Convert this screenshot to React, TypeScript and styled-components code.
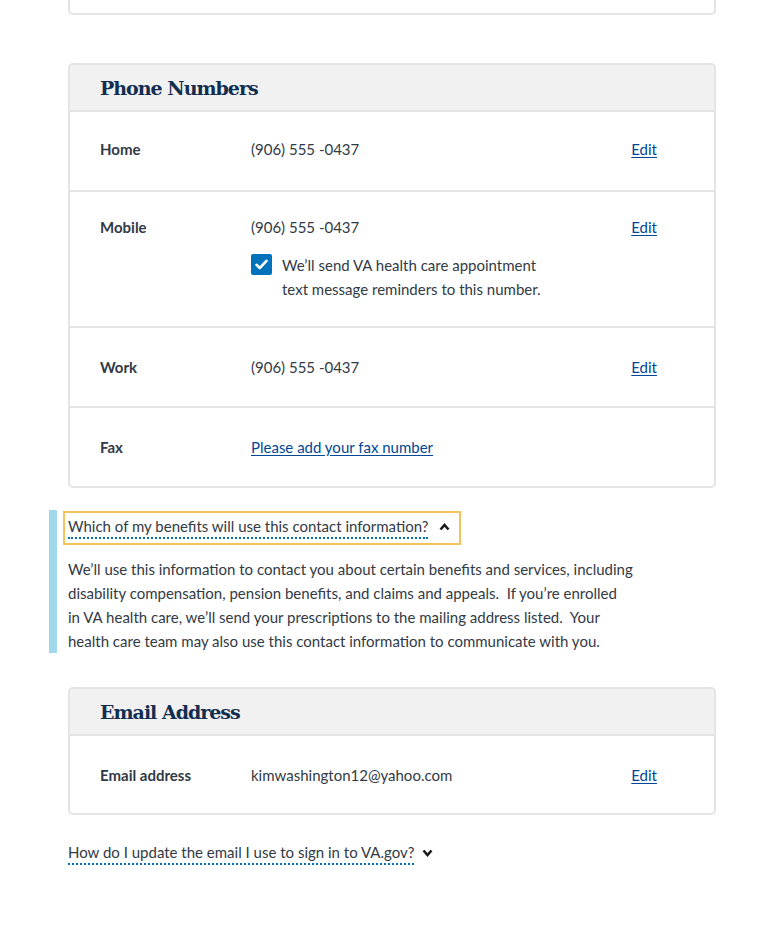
import React from "react";
import styled, { createGlobalStyle } from "styled-components";

const Global = createGlobalStyle`
  html, body { margin: 0; padding: 0; background: #fff; }
  body { font-family: Lato, "Open Sans", sans-serif; color: #323a45; }
`;

const Page = styled.div`
  width: 648px;
  margin-left: 68px;
  display: flex;
  flex-direction: column;
`;

const CutCard = styled.div`
  height: 13px;
  border: 2px solid #e4e4e4;
  border-top: none;
  border-radius: 0 0 5px 5px;
`;

const Card = styled.section<{ $mt: number }>`
  margin-top: ${(p) => p.$mt}px;
  border: 2px solid #e4e4e4;
  border-radius: 5px;
  overflow: hidden;
`;

const CardHeader = styled.header`
  background: #f1f1f1;
  border-bottom: 2px solid #e4e4e4;
  height: 45px;
  display: flex;
  align-items: center;
  padding-left: 30px;
`;

const CardTitle = styled.h2`
  margin: 0;
  font-family: "DejaVu Serif", "Liberation Serif", serif;
  font-weight: bold;
  font-size: 19px;
  letter-spacing: -1px;
  color: #112e51;
`;

const Row = styled.div<{ $last?: boolean; $pt?: number; $pb?: number }>`
  display: grid;
  grid-template-columns: 151px 1fr auto;
  align-items: start;
  padding: ${(p) => p.$pt ?? 25}px 57px ${(p) => p.$pb ?? 29}px 30px;
  border-bottom: ${(p) => (p.$last ? "none" : "2px solid #e4e4e4")};
  font-size: 15px;
  line-height: 24px;
`;

const Label = styled.div`
  font-weight: bold;
  color: #323a45;
`;

const Value = styled.div`
  display: flex;
  flex-direction: column;
  gap: 14px;
  color: #323a45;
`;

const Link = styled.a`
  color: #004795;
  text-decoration: underline;
  text-underline-offset: 2px;
  cursor: pointer;
`;

const CheckRow = styled.div`
  display: flex;
  align-items: flex-start;
  gap: 10px;
`;

const CheckBox = styled.span`
  flex: none;
  width: 21px;
  height: 21px;
  margin-top: 1px;
  border-radius: 2px;
  background: #0071bb;
  display: flex;
  align-items: center;
  justify-content: center;
`;

const CheckText = styled.span`
  max-width: 270px;
`;

const Accordion = styled.div`
  margin-top: 22px;
  margin-left: -19px;
  border-left: 8px solid #a1d9ec;
  padding: 0 0 0 11px;
  width: 600px;
`;

const Toggle = styled.button<{ $focused?: boolean }>`
  display: inline-flex;
  align-items: center;
  gap: ${(p) => (p.$focused ? "11px" : "8px")};
  background: none;
  border: ${(p) => (p.$focused ? "2px solid #f5c35b" : "2px solid transparent")};
  margin: ${(p) => (p.$focused ? "1px 0 0 -5px" : "0 0 0 -2px")};
  padding: ${(p) => (p.$focused ? "2px 9px 4px 3px" : "0")};
  font-family: Lato, "Open Sans", sans-serif;
  font-size: 15px;
  color: #323a45;
  cursor: pointer;
`;

const Dotted = styled.span`
  line-height: 22px;
  border-bottom: 2px dotted #0071bb;
`;

const Body = styled.p`
  margin: 12px 0 0;
  font-size: 15px;
  line-height: 24px;
  white-space: nowrap;
`;

const Bottom = styled.div`
  margin-top: 24px;
  margin-bottom: 60px;
`;

const Check = () => (
  <svg width="13" height="11" viewBox="0 0 13 11">
    <path d="M1.5 5.8 L4.8 9 L11.5 1.8" fill="none" stroke="#fff" strokeWidth="2.6" strokeLinecap="round" strokeLinejoin="round" />
  </svg>
);

const Chevron = ({ up }: { up?: boolean }) => (
  <svg width="11" height="8" viewBox="0 0 11 8">
    <path
      d={up ? "M1.5 6.5 L5.5 2 L9.5 6.5" : "M1.5 1.5 L5.5 6 L9.5 1.5"}
      fill="none"
      stroke="#1b1b1b"
      strokeWidth="2.6"
    />
  </svg>
);

export default function App() {
  return (
    <>
      <Global />
      <Page>
        <CutCard />
        <Card $mt={48}>
          <CardHeader>
            <CardTitle>Phone Numbers</CardTitle>
          </CardHeader>
          <Row>
            <Label>Home</Label>
            <Value>(906) 555 -0437</Value>
            <Link>Edit</Link>
          </Row>
          <Row $pt={23} $pb={25}>
            <Label>Mobile</Label>
            <Value>
              <span>(906) 555 -0437</span>
              <CheckRow>
                <CheckBox>
                  <Check />
                </CheckBox>
                <CheckText>
                  We’ll send VA health care appointment text message reminders to this number.
                </CheckText>
              </CheckRow>
            </Value>
            <Link>Edit</Link>
          </Row>
          <Row $pt={27} $pb={27}>
            <Label>Work</Label>
            <Value>(906) 555 -0437</Value>
            <Link>Edit</Link>
          </Row>
          <Row $last $pt={27} $pb={27}>
            <Label>Fax</Label>
            <Value>
              <Link>Please add your fax number</Link>
            </Value>
            <span />
          </Row>
        </Card>
        <Accordion>
          <Toggle $focused>
            <Dotted>Which of my benefits will use this contact information?</Dotted>
            <Chevron up />
          </Toggle>
          <Body>
            We’ll use this information to contact you about certain benefits and services, including
            <br />
            disability compensation, pension benefits, and claims and appeals.&nbsp; If you’re enrolled
            <br />
            in VA health care, we’ll send your prescriptions to the mailing address listed.&nbsp; Your
            <br />
            health care team may also use this contact information to communicate with you.
          </Body>
        </Accordion>
        <Card $mt={34}>
          <CardHeader>
            <CardTitle>Email Address</CardTitle>
          </CardHeader>
          <Row $last $pt={27} $pb={26}>
            <Label>Email address</Label>
            <Value>kimwashington12@yahoo.com</Value>
            <Link>Edit</Link>
          </Row>
        </Card>
        <Bottom>
          <Toggle>
            <Dotted>How do I update the email I use to sign in to VA.gov?</Dotted>
            <Chevron />
          </Toggle>
        </Bottom>
      </Page>
    </>
  );
}
